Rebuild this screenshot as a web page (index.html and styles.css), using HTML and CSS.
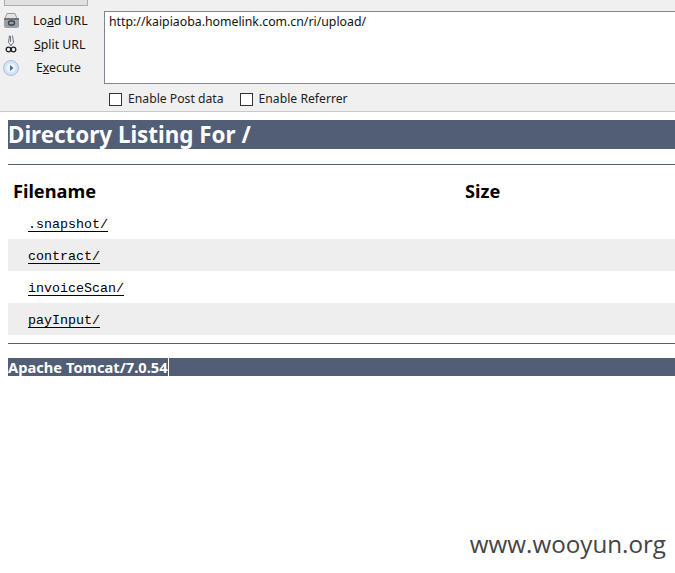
FILE: index.html
```html
<!DOCTYPE html>
<html>
<head>
<meta charset="utf-8">
<title>Directory Listing For /</title>
<link rel="stylesheet" href="styles.css">
</head>
<body>
<div class="toolbar">
  <div class="side">
    <div class="top-btn"></div>
    <div class="cmd">
      <svg class="ico" viewBox="0 0 18 18" width="18" height="18"><path d="M5 2.5h8l2 5H3z" fill="#e4e4e4" stroke="#9a9a9a"/><rect x="2" y="7" width="15" height="10" rx="2" fill="#9ba0a5"/><rect x="2" y="7" width="15" height="2" fill="#70757a"/><rect x="6.5" y="10" width="6" height="4" rx="2" fill="none" stroke="#3d4248" stroke-width="1.3"/></svg>
      <span class="cmd-label load">Lo<u>a</u>d URL</span>
    </div>
    <div class="cmd">
      <svg class="ico" viewBox="0 0 18 18" width="18" height="18"><path d="M7.5 0.5L6.5 7.5 9.5 11M10.5 0.5L11.5 7.5 8.5 11M8.5 1v6" fill="none" stroke="#66727e"/><circle cx="6.5" cy="14.5" r="2.3" fill="none" stroke="#222" stroke-width="1.3"/><circle cx="11.5" cy="14.5" r="2.3" fill="none" stroke="#222" stroke-width="1.3"/></svg>
      <span class="cmd-label split"><u>S</u>plit URL</span>
    </div>
    <div class="cmd exec-row">
      <svg class="ico" viewBox="0 0 18 18" width="18" height="18"><circle cx="9" cy="9" r="7.5" fill="#d3e3f6" stroke="#a9c1dc"/><circle cx="9" cy="9" r="4.5" fill="#eef4fb"/><path d="M8 6l3.5 3L8 12z" fill="#3a6fb5"/></svg>
      <span class="cmd-label exec">E<u>x</u>ecute</span>
    </div>
  </div>
  <div class="main">
    <div class="url">http://kaipiaoba.homelink.com.cn/ri/upload/</div>
    <div class="options">
      <label class="opt"><span class="box"></span>Enable Post data</label>
      <label class="opt"><span class="box"></span>Enable Referrer</label>
    </div>
  </div>
</div>
<div class="page">
  <h1 class="title">Directory Listing For /</h1>
  <hr class="rule first">
  <div class="table">
    <div class="row head"><div class="name">Filename</div><div class="size">Size</div></div>
    <div class="row"><div class="name"><a href="#">.snapshot/</a></div></div>
    <div class="row alt"><div class="name"><a href="#">contract/</a></div></div>
    <div class="row"><div class="name"><a href="#">invoiceScan/</a></div></div>
    <div class="row alt"><div class="name"><a href="#">payInput/</a></div></div>
  </div>
  <hr class="rule second">
  <h3 class="foot"><span class="sel">Apache Tomcat/7.0.54</span></h3>
</div>
<div class="mark">www.wooyun.org</div>
</body>
</html>
```
FILE: styles.css
```css
html, body {
  margin: 0;
  padding: 0;
  background: #fff;
  overflow: hidden;
  height: 573px;
}
body {
  position: relative;
}
.toolbar {
  display: flex;
  height: 111px;
  background: #f0f0f0;
  border-bottom: 1px solid #c8c8c8;
  font-family: "Noto Sans", "Open Sans", sans-serif;
  font-size: 12.3px;
  color: #111;
}
.side {
  width: 104px;
  flex: none;
}
.top-btn {
  width: 84px;
  height: 6px;
  margin-left: 4px;
  margin-bottom: 2px;
  box-sizing: border-box;
  background: #e1e1e1;
  border: 1px solid #adadad;
  border-top: none;
}
.cmd {
  display: flex;
  align-items: center;
  height: 24px;
  padding-left: 2px;
}
.ico {
  flex: none;
}
.cmd-label {
  white-space: nowrap;
}
.load { margin-left: 13px; }
.split { margin-left: 14px; }
.exec {
  margin-left: 16px;
  margin-bottom: 2px;
}
.main {
  flex: 1;
  min-width: 0;
  padding-top: 11px;
}
.url {
  height: 73px;
  box-sizing: border-box;
  background: #fff;
  border: 1px solid #828790;
  border-right: none;
  padding: 1px 4px;
  line-height: 17px;
}
.options {
  display: flex;
  gap: 16px;
  padding: 7px 0 0 5px;
}
.opt {
  display: flex;
  align-items: center;
  gap: 6px;
  line-height: 16px;
  color: #222;
  font-size: 12.2px;
}
.box {
  width: 11px;
  height: 11px;
  background: #fff;
  border: 1px solid #333;
}
.page {
  padding-left: 8px;
}
.title {
  margin: 8px 0 0;
  height: 29px;
  background: #525d76;
  color: #fff;
  font-family: "Noto Sans", sans-serif;
  font-size: 22.4px;
  font-weight: bold;
  line-height: 30px;
  white-space: nowrap;
}
.rule {
  margin: 0;
  border: none;
  height: 1px;
  background: #525d76;
}
.rule.first { margin-top: 15px; }
.rule.second { margin-top: 8px; }
.table {
  font-family: "Liberation Mono", monospace;
  font-size: 13.33px;
  margin-top: 9px;
}
.row {
  display: flex;
  height: 32px;
  align-items: center;
  box-sizing: border-box;
  padding-top: 3px;
}
.row.alt {
  background: #eeeeee;
}
.row.head {
  height: 33px;
  padding-top: 0;
  font-family: "Noto Sans", sans-serif;
  font-size: 18.2px;
  font-weight: bold;
  color: #000;
}
.head .name {
  padding-left: 5px;
  width: 452px;
  flex: none;
}
.name a {
  margin-left: 20px;
  color: #000;
  text-decoration: underline;
  text-underline-offset: 3px;
}
.foot {
  margin: 14px 0 0;
  height: 18px;
  background: #525d76;
  color: #fff;
  font-family: "Noto Sans", sans-serif;
  font-size: 14.7px;
  font-weight: bold;
  line-height: 19px;
}
.sel {
  display: inline-block;
  height: 18px;
  border-right: 1px solid #fff;
}
.mark {
  position: absolute;
  right: 9px;
  top: 526px;
  font-family: "Open Sans", sans-serif;
  font-size: 24.2px;
  line-height: 36px;
  color: #444;
}
```
